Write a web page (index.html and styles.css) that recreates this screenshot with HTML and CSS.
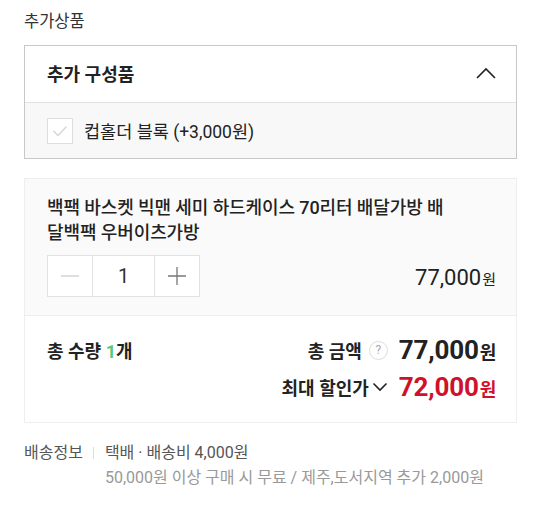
FILE: index.html
```html
<!DOCTYPE html>
<html lang="ko">

<head>
    <meta charset="UTF-8">
    <link rel="stylesheet" href="styles.css">
    <title>추가상품</title>
</head>

<body>
    <div class="wrap">
        <p class="section-title">추가상품</p>

        <div class="option-box">
            <div class="option-head">
                <span>추가 구성품</span>
                <svg class="chevron" width="20" height="12" viewBox="0 0 20 12">
                    <path d="M1 11 L10 2 L19 11" fill="none" stroke="#222" stroke-width="1.6"/>
                </svg>
            </div>
            <label class="option-item">
                <span class="checkbox">
                    <svg width="16" height="12" viewBox="0 0 16 12">
                        <path d="M1.5 6 L6 10.5 L14.5 1.5" fill="none" stroke="#d5d5d5" stroke-width="1.3"/>
                    </svg>
                </span>
                <span>컵홀더 블록 (+3,000원)</span>
            </label>
        </div>

        <div class="order-card">
            <div class="order-item">
                <p class="item-name">백팩 바스켓 빅맨 세미 하드케이스 70리터 배달가방 배<br>달백팩 우버이츠가방</p>
                <div class="item-row">
                    <div class="qty">
                        <button class="qty-btn">
                            <svg width="18" height="18" viewBox="0 0 18 18"><path d="M0 9 H18" stroke="#ccc" stroke-width="1.3"/></svg>
                        </button>
                        <span class="qty-num">1</span>
                        <button class="qty-btn">
                            <svg width="18" height="18" viewBox="0 0 18 18"><path d="M0 9 H18 M9 0 V18" stroke="#777" stroke-width="1.3"/></svg>
                        </button>
                    </div>
                    <p class="item-price">77,000<small>원</small></p>
                </div>
            </div>
            <div class="order-total">
                <div class="total-row">
                    <span class="total-label">총 수량 <em>1</em>개</span>
                    <span class="total-right">
                        <span class="total-label">총 금액</span>
                        <span class="help">?</span>
                        <span class="total-price">77,000<small>원</small></span>
                    </span>
                </div>
                <div class="total-row sale">
                    <span></span>
                    <span class="total-right">
                        <span class="total-label">최대 할인가</span>
                        <svg class="down" width="16" height="10" viewBox="0 0 16 10">
                            <path d="M1.5 1.5 L8 8 L14.5 1.5" fill="none" stroke="#222" stroke-width="1.6"/>
                        </svg>
                        <span class="total-price red">72,000<small>원</small></span>
                    </span>
                </div>
            </div>
        </div>

        <div class="delivery">
            <span class="delivery-label">배송정보</span>
            <div class="delivery-info">
                <p>택배 · 배송비 4,000원</p>
                <p class="sub">50,000원 이상 구매 시 무료 / 제주,도서지역 추가 2,000원</p>
            </div>
        </div>
    </div>
</body>

</html>
```

FILE: styles.css
```css
@charset "UTF-8";

/* ========BASIC======== */
body {
    margin: 0;
    padding: 0;
    font-family: Roboto, "Noto Sans CJK KR", sans-serif;
    color: #222;
    background: #fff;
}

p {
    margin: 0;
}

button {
    font-family: inherit;
}

.wrap {
    padding: 10px 23px 0 24px;
}

.section-title {
    font-size: 16.5px;
    line-height: 24px;
    color: #333;
    margin-bottom: 11px;
}

/* ========OPTION BOX======== */
.option-box {
    border: 1px solid #c8c8c8;
}

.option-head {
    display: flex;
    align-items: center;
    justify-content: space-between;
    height: 54px;
    padding: 0 20px 2px 22px;
    font-size: 18px;
    font-weight: 700;
    border-bottom: 1px solid #e2e2e2;
}

.option-item {
    display: flex;
    align-items: center;
    gap: 11px;
    height: 55px;
    padding: 0 22px;
    font-size: 17.5px;
    background: #f8f8f8;
}

.checkbox {
    display: flex;
    align-items: center;
    justify-content: center;
    width: 24px;
    height: 24px;
    border: 1px solid #ddd;
    background: #fff;
}

/* ========ORDER CARD======== */
.order-card {
    margin-top: 19px;
    border: 1px solid #eee;
}

.order-item {
    padding: 16px 20px 18px 22px;
    background: #fafafa;
    border-bottom: 1px solid #eee;
}

.item-name {
    font-size: 18px;
    font-weight: 500;
    line-height: 25px;
    letter-spacing: -0.1px;
}

.item-row {
    display: flex;
    align-items: center;
    justify-content: space-between;
    margin-top: 10px;
}

.qty {
    display: flex;
    height: 40px;
    border: 1px solid #e2e2e2;
    background: #fff;
}

.qty-btn {
    display: flex;
    align-items: center;
    justify-content: center;
    width: 44px;
    padding: 0;
    border: 0;
    background: #fff;
}

.qty-num {
    display: flex;
    align-items: center;
    justify-content: center;
    width: 61px;
    font-size: 20px;
    color: #333;
    border-left: 1px solid #e2e2e2;
    border-right: 1px solid #e2e2e2;
}

.item-price {
    font-size: 22px;
    color: #222;
    padding-top: 2px;
}

.item-price small {
    font-size: 15px;
    margin-left: 1px;
}

.order-total {
    padding: 21px 20px 22px 22px;
}

.total-row {
    display: flex;
    align-items: center;
    justify-content: space-between;
    height: 26px;
}

.total-row.sale {
    margin-top: 11px;
}

.total-label {
    font-size: 18px;
    font-weight: 700;
}

.total-label em {
    font-style: normal;
    color: #5cc77a;
}

.total-right {
    display: flex;
    align-items: center;
}

.help {
    display: inline-flex;
    align-items: center;
    justify-content: center;
    width: 17px;
    height: 17px;
    margin: 0 11px 0 7px;
    border: 1px solid #ddd;
    border-radius: 50%;
    font-size: 12px;
    color: #aaa;
}

.down {
    margin: 0 11px 0 3px;
}

.total-price {
    font-size: 26px;
    font-weight: 700;
    letter-spacing: -0.2px;
}

.total-price small {
    font-size: 18px;
    margin-left: 1px;
}

.total-price.red {
    color: #d0112b;
}

/* ========DELIVERY======== */
.delivery {
    display: flex;
    margin-top: 17px;
    font-size: 16px;
    line-height: 25px;
    color: #555;
}

.delivery-label {
    position: relative;
    padding-right: 22px;
}

.delivery-label::after {
    content: "";
    position: absolute;
    right: 11px;
    top: 7px;
    width: 1px;
    height: 12px;
    background: #ddd;
}

.delivery-info .sub {
    color: #999;
}
```
